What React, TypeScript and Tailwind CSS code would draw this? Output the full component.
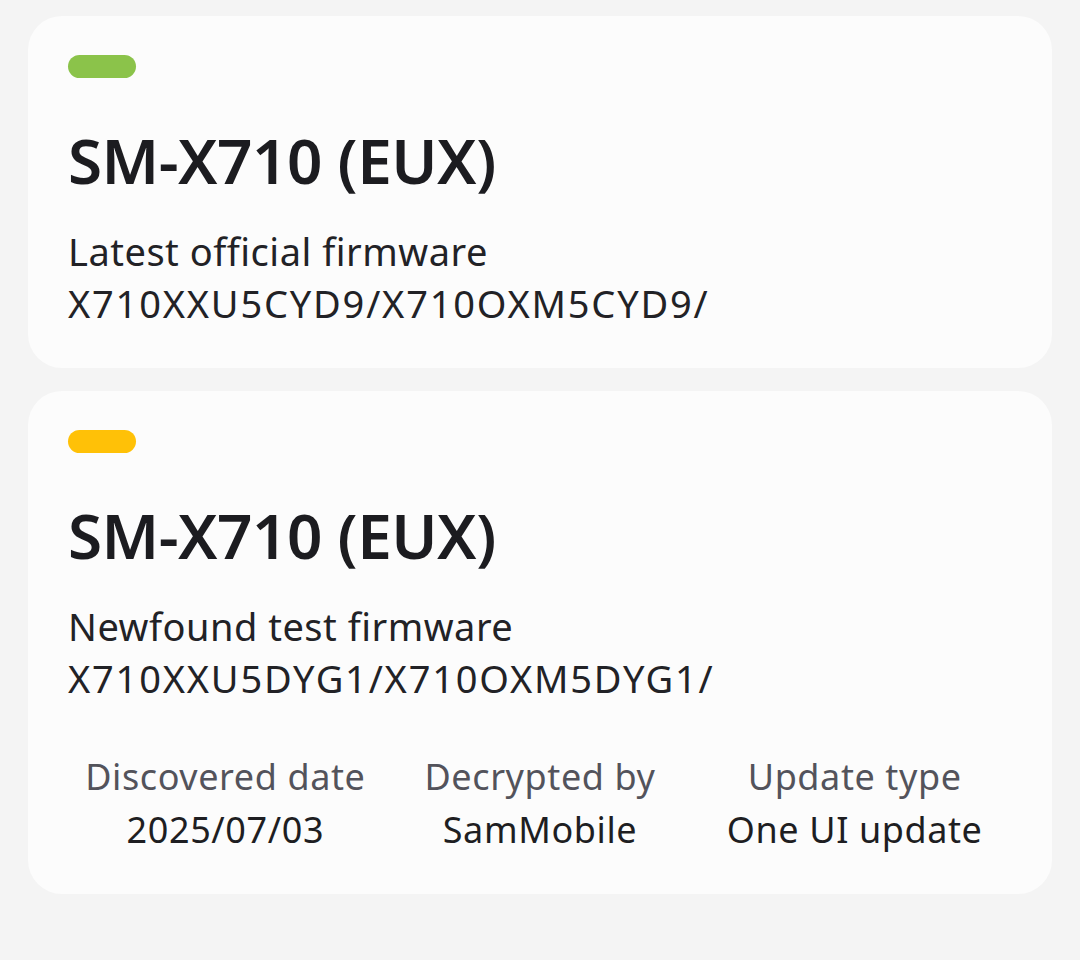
export default function App() {
  return (
    <main className="min-h-[960px] bg-[#f4f4f4] px-[28px] pt-[16px] font-['Noto_Sans',sans-serif] text-[#1e1e22]">
      <div className="flex flex-col gap-[23px]">
        <FirmwareCard
          color="bg-[#8bc34a]"
          model="SM-X710 (EUX)"
          label="Latest official firmware"
          code="X710XXU5CYD9/X710OXM5CYD9/"
        />
        <FirmwareCard
          color="bg-[#ffc107]"
          model="SM-X710 (EUX)"
          label="Newfound test firmware"
          code="X710XXU5DYG1/X710OXM5DYG1/"
        >
          <div className="mt-[46px] grid grid-cols-3 text-center text-[36px] leading-[53px] tracking-[0.6px]">
            <Info label="Discovered date" value="2025/07/03" />
            <Info label="Decrypted by" value="SamMobile" />
            <Info label="Update type" value="One UI update" />
          </div>
        </FirmwareCard>
      </div>
    </main>
  )
}

function FirmwareCard({
  color,
  model,
  label,
  code,
  children,
}: {
  color: string
  model: string
  label: string
  code: string
  children?: React.ReactNode
}) {
  return (
    <div className={`rounded-[34px] bg-[#fcfcfc] px-[40px] pt-[39px] ${children ? 'pb-[38px]' : 'pb-[39px]'}`}>
      <div className={`h-[23px] w-[68px] rounded-full ${color}`} />
      <h2 className="mt-[42px] text-[62px] font-semibold leading-[80px] tracking-[-0.5px] text-[#1c1c20]">
        {model}
      </h2>
      <div className="mt-[25px] text-[38px] leading-[52px] text-[#222226]">
        <p className="tracking-[0.5px]">{label}</p>
        <p className="tracking-[1.8px]">{code}</p>
      </div>
      {children}
    </div>
  )
}

function Info({ label, value }: { label: string; value: string }) {
  return (
    <div>
      <p className="text-[#53535b]">{label}</p>
      <p className="text-[#1e1e22]">{value}</p>
    </div>
  )
}
